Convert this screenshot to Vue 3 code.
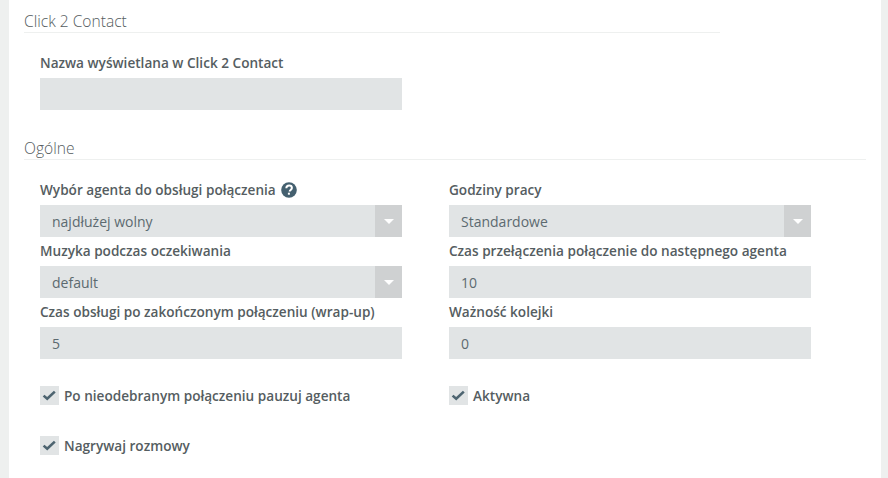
<template>
  <div class="panel">
    <!-- Click 2 Contact -->
    <section class="section c2c">
      <h3 class="section-title">Click 2 Contact</h3>
      <div class="c2c-body">
        <label class="field-label">Nazwa wyświetlana w Click 2 Contact</label>
        <div class="input"></div>
      </div>
    </section>

    <!-- Ogólne -->
    <section class="section general">
      <h3 class="section-title">Ogólne</h3>
      <div class="form-grid">
        <div v-for="field in fields" :key="field.label" class="field">
          <label class="field-label">
            {{ field.label }}
            <svg v-if="field.help" class="help" viewBox="0 0 16 16">
              <circle cx="8" cy="8" r="7.8" fill="#44606f" />
              <path d="M5.3 6.2C5.4 4.6 6.5 3.6 8.1 3.6c1.6 0 2.8 1 2.8 2.4 0 1.1-.7 1.6-1.4 2.1-.6.4-.8.7-.8 1.4" fill="none" stroke="#fff" stroke-width="2" />
              <rect x="6.9" y="10.7" width="2" height="2" fill="#fff" />
            </svg>
          </label>
          <div class="input">
            <span>{{ field.value }}</span>
            <span v-if="field.select" class="caret"><i></i></span>
          </div>
        </div>
      </div>

      <div class="checks">
        <div v-for="check in checks" :key="check" class="check">
          <span class="box">
            <svg viewBox="0 0 19 19">
              <path d="M3.6 9.6l3.6 3.2 7.6-7.2" fill="none" stroke="#4d6470" stroke-width="2.6" />
            </svg>
          </span>
          {{ check }}
        </div>
      </div>
    </section>
  </div>
</template>

<script setup>
const fields = [
  { label: 'Wybór agenta do obsługi połączenia', value: 'najdłużej wolny', select: true, help: true },
  { label: 'Godziny pracy', value: 'Standardowe', select: true },
  { label: 'Muzyka podczas oczekiwania', value: 'default', select: true },
  { label: 'Czas przełączenia połączenie do następnego agenta', value: '10' },
  { label: 'Czas obsługi po zakończonym połączeniu (wrap-up)', value: '5' },
  { label: 'Ważność kolejki', value: '0' }
]

const checks = ['Po nieodebranym połączeniu pauzuj agenta', 'Aktywna', 'Nagrywaj rozmowy']
</script>

<style>
html,
body {
  background: #eef0ef;
  overflow: hidden;
}
</style>

<style scoped>
.panel {
  height: 478px;
  margin: 0 7px 0 9px;
  padding: 0 15px;
  box-sizing: border-box;
  background: #fff;
  font-family: "Open Sans", sans-serif;
  font-size: 14px;
  color: #555d61;
  overflow: hidden;
}

.section-title {
  margin: 0;
  height: 33px;
  padding-top: 11px;
  box-sizing: border-box;
  border-bottom: 1px solid #eef0ef;
  font-size: 15.6px;
  font-weight: 300;
  line-height: 20px;
  color: #555c60;
}

.c2c {
  width: 696px;
}

.c2c-body {
  padding: 20px 0 0 16px;
  width: 362px;
}

.general {
  margin-top: 17px;
}

.form-grid {
  display: grid;
  grid-template-columns: 362px 362px;
  column-gap: 47px;
  padding: 20px 0 0 16px;
}

.field-label {
  display: flex;
  align-items: center;
  gap: 5px;
  height: 20px;
  margin-bottom: 5px;
  font-size: 13.6px;
  font-weight: 600;
  line-height: 20px;
  white-space: nowrap;
}

.field {
  height: 61px;
}

.help {
  width: 16px;
  height: 16px;
}

.input {
  display: flex;
  justify-content: space-between;
  height: 32px;
  padding-left: 12px;
  background: #e1e4e5;
  color: #5c6a70;
  line-height: 33px;
}

.caret {
  display: flex;
  align-items: center;
  justify-content: center;
  width: 27px;
  background: #cfd1d2;
}

.caret i {
  border-top: 5px solid #fff;
  border-left: 5px solid transparent;
  border-right: 5px solid transparent;
}

.checks {
  display: grid;
  grid-template-columns: 362px 362px;
  column-gap: 47px;
  row-gap: 31px;
  padding: 23px 0 0 16px;
}

.check {
  display: flex;
  align-items: center;
  gap: 5px;
  height: 19px;
  font-size: 13.6px;
  font-weight: 600;
  white-space: nowrap;
}

.box {
  width: 19px;
  height: 19px;
  background: #e1e4e5;
}

.box svg {
  display: block;
  width: 19px;
  height: 19px;
}
</style>
